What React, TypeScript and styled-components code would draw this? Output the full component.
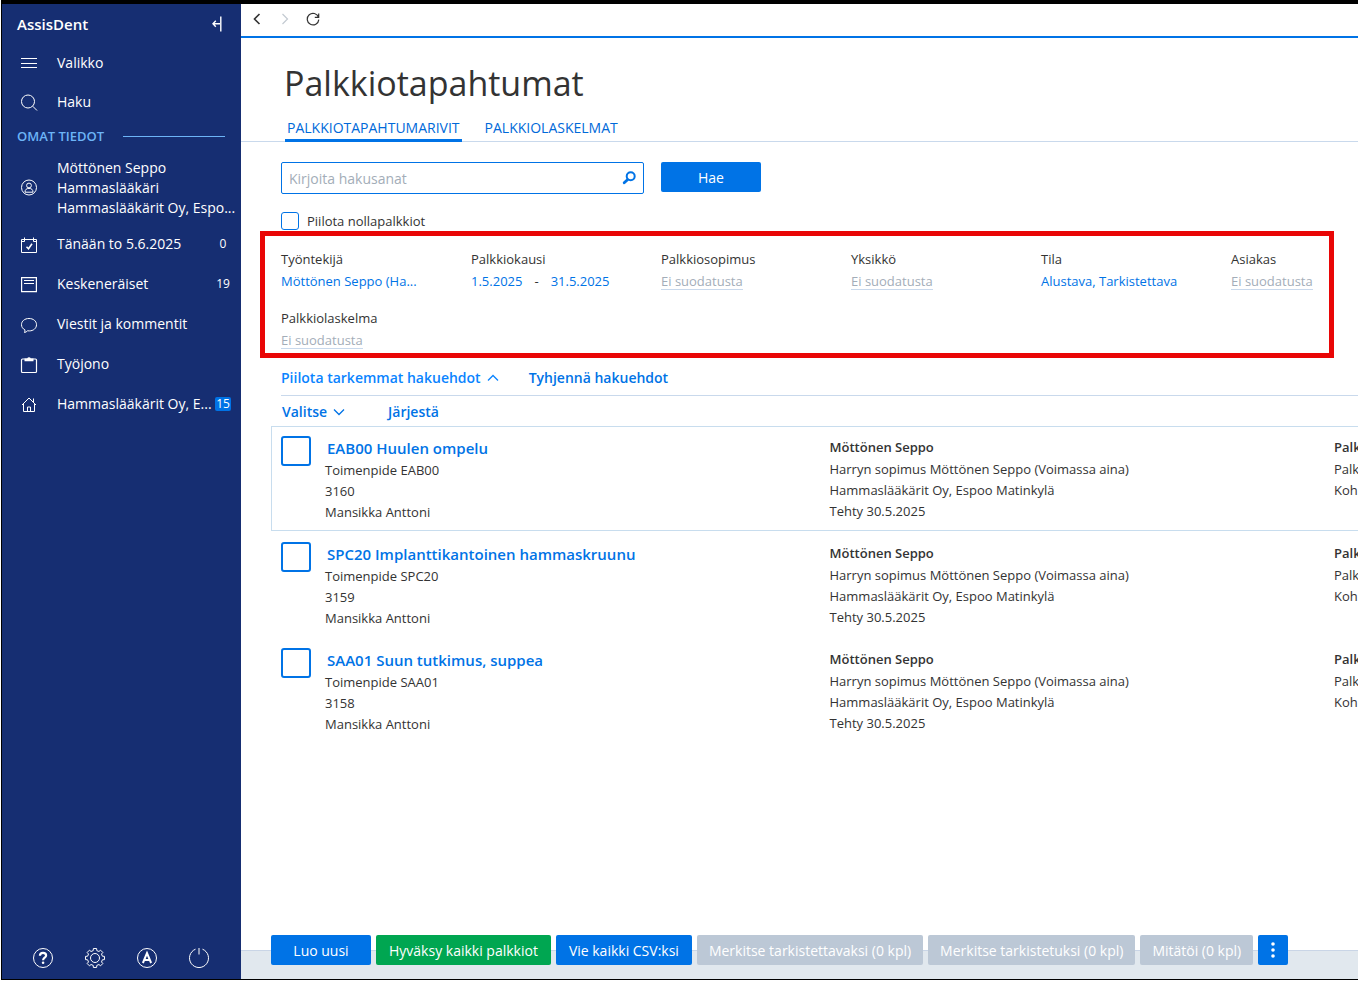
import React from 'react';
import styled, { createGlobalStyle } from 'styled-components';

const color = {
  navy: '#162e72',
  blue: '#0073e6',
  bright: '#0a84ff',
  link: '#0069d9',
  text: '#333333',
  muted: '#a3adb8',
  line: '#c9d9ec',
};

const GlobalStyle = createGlobalStyle`
  *, *::before, *::after { box-sizing: border-box; }
  body {
    margin: 0;
    background: #fff;
    color: ${color.text};
    font-family: "Open Sans", "Noto Sans", sans-serif;
    font-size: 13px;
    line-height: 21px;
  }
  button, input { font: inherit; color: inherit; }
  button { border: 0; padding: 0; background: none; cursor: pointer; white-space: nowrap; }
  a { text-decoration: none; color: inherit; }
  ul { list-style: none; margin: 0; padding: 0; }
  svg { display: block; }
`;

const Shell = styled.div`
  display: flex;
  min-height: calc(100vh - 1px);
  margin: 0 0 1px 1px;
  border: solid #000;
  border-width: 4px 0 1px 1px;
  overflow: hidden;
`;

/* ---------- sidebar ---------- */

const Sidebar = styled.aside`
  flex: none;
  width: 239px;
  display: flex;
  flex-direction: column;
  background: ${color.navy};
  color: #fff;
  font-size: 14px;
  line-height: 20px;
`;

const Brand = styled.div`
  display: flex;
  align-items: center;
  justify-content: space-between;
  height: 39px;
  padding: 0 19px 0 15px;
  font-size: 15px;
  font-weight: 600;
`;

const NavItem = styled.a<{ $height?: number }>`
  display: flex;
  align-items: center;
  height: ${(p) => p.$height ?? 40}px;
  padding: 0 10px 0 17px;
  white-space: nowrap;
  svg { flex: none; margin-right: 18px; }
`;

const NavText = styled.span`
  flex: 1 1 0;
  min-width: 0;
`;

const NavLine = styled.span`
  display: block;
`;

const Count = styled.span<{ $filled?: boolean }>`
  flex: none;
  min-width: 16px;
  line-height: 14px;
  font-size: 12px;
  text-align: center;
  border-radius: 2px;
  background: ${(p) => (p.$filled ? color.blue : 'transparent')};
`;

const SectionTitle = styled.h2`
  display: flex;
  align-items: center;
  gap: 19px;
  height: 30px;
  margin: 0;
  padding: 0 16px 0 15px;
  color: #6cb4f7;
  font-size: 13px;
  font-weight: 600;
  &::after { content: ''; flex: 1; height: 1px; background: #6cb4f7; }
`;

const SidebarTools = styled.div`
  display: flex;
  gap: 30px;
  margin-top: auto;
  padding: 0 0 10px 30px;
`;

/* ---------- main column ---------- */

const Main = styled.main`
  flex: 1 1 0;
  min-width: 0;
  display: flex;
  flex-direction: column;
`;

const Toolbar = styled.div`
  display: flex;
  align-items: center;
  gap: 12px;
  height: 34px;
  padding: 0 0 2px 8px;
  border-bottom: 2px solid ${color.blue};
`;

const PageTitle = styled.h1`
  margin: 0;
  padding: 20px 43px 0;
  font-size: 34px;
  line-height: 50px;
  font-weight: 400;
`;

const Tabs = styled.nav`
  display: flex;
  gap: 21px;
  margin-top: 8px;
  padding-left: 44px;
  border-bottom: 1px solid ${color.line};
`;

const Tab = styled.a<{ $active?: boolean }>`
  margin-bottom: -1px;
  padding: 0 2px;
  border-bottom: 3px solid ${(p) => (p.$active ? color.blue : 'transparent')};
  color: ${color.link};
  font-size: 14px;
  line-height: 23px;
`;

const SearchRow = styled.form`
  display: flex;
  gap: 17px;
  padding: 20px 40px 0;
`;

const SearchBox = styled.label`
  display: flex;
  align-items: center;
  width: 363px;
  height: 32px;
  padding: 0 6px 0 7px;
  border: 1px solid ${color.blue};
  border-radius: 2px;
  input {
    flex: 1;
    min-width: 0;
    padding: 0;
    border: 0;
    outline: 0;
    background: none;
    font-size: 14px;
  }
  input::placeholder { color: ${color.muted}; opacity: 1; }
`;

const ActionButton = styled.button<{ $tone?: 'blue' | 'green' | 'grey'; $min?: number }>`
  display: flex;
  align-items: center;
  justify-content: center;
  min-width: ${(p) => p.$min ?? 30}px;
  height: 30px;
  padding: 0 ${(p) => (p.$tone === 'grey' ? 12 : 13)}px;
  border-radius: 2px;
  background: ${(p) => ({ blue: color.blue, green: '#00a651', grey: '#bcc8d6' })[p.$tone ?? 'blue']};
  color: #fff;
  font-size: 14px;
`;

const IconAction = styled(ActionButton)`
  padding: 0;
`;

const CheckRow = styled.label`
  display: flex;
  align-items: center;
  gap: 8px;
  height: 18px;
  margin: 18px 0 1px 40px;
`;

const CheckBox = styled.input.attrs({ type: 'checkbox' })<{ $large?: boolean }>`
  appearance: none;
  flex: none;
  width: ${(p) => (p.$large ? 30 : 18)}px;
  height: ${(p) => (p.$large ? 30 : 18)}px;
  margin: 0;
  border: ${(p) => (p.$large ? 2 : 1)}px solid ${color.blue};
  border-radius: 3px;
  background: #fff;
`;

const Filters = styled.section`
  display: grid;
  grid-template-columns: repeat(5, minmax(0, 190px)) auto;
  row-gap: 15px;
  margin: 0 24px 0 19px;
  padding: 12px 0 2px 16px;
  border: 5px solid #e90606;
`;

const Filter = styled.div`
  display: flex;
  flex-direction: column;
  align-items: flex-start;
  line-height: 22px;
  white-space: nowrap;
`;

const FilterValues = styled.div`
  display: flex;
  align-items: flex-start;
  gap: 12px;
  height: 22px;
`;

const FilterValue = styled.button<{ $empty?: boolean }>`
  height: 20px;
  border-bottom: 1px solid ${(p) => (p.$empty ? color.line : 'transparent')};
  color: ${(p) => (p.$empty ? color.muted : color.blue)};
`;

const LinkRow = styled.div<{ $gap: number }>`
  display: flex;
  gap: ${(p) => p.$gap}px;
  margin-left: 40px;
`;

const FilterLinks = styled(LinkRow)`
  height: 38px;
  padding-top: 9px;
  border-bottom: 1px solid ${color.line};
`;

const ListLinks = styled(LinkRow)`
  height: 30px;
  padding: 5px 0 0 1px;
`;

const TextButton = styled.button<{ $bright?: boolean }>`
  display: flex;
  align-items: center;
  gap: 6px;
  height: 21px;
  color: ${(p) => (p.$bright ? color.bright : color.blue)};
  font-size: 14px;
  font-weight: 600;
`;

const Row = styled.li<{ $selected?: boolean }>`
  display: grid;
  grid-template-columns: 44px repeat(2, minmax(0, 1fr)) 24px;
  height: 105px;
  margin: 0 0 1px 30px;
  padding: 9px 0 0 9px;
  border: 1px solid ${(p) => (p.$selected ? '#c8ddee' : 'transparent')};
  border-right: 0;
`;

const Cell = styled.div`
  display: flex;
  flex-direction: column;
  align-items: flex-start;
  white-space: nowrap;
`;

const RowTitle = styled.a`
  padding-left: 2px;
  color: ${color.blue};
  font-size: 15px;
  line-height: 24px;
  font-weight: 600;
`;

const RowName = styled.strong`
  line-height: 23px;
  font-weight: 600;
`;

const Footer = styled.footer`
  display: flex;
  gap: 5px;
  height: 29px;
  margin-top: auto;
  padding-left: 30px;
  border-top: 1px solid #c9d5e6;
  background: #e1e8ee;
  ${ActionButton} { margin-top: -16px; }
`;

/* ---------- icons ---------- */

const Svg = ({ size = 20, w = 1, children }: { size?: number; w?: number; children: React.ReactNode }) => (
  <svg width={size} height={size} viewBox={`0 0 ${size} ${size}`} fill="none" stroke="currentColor" strokeWidth={w} aria-hidden="true">
    {children}
  </svg>
);

const CollapseIcon = () => (
  <svg width="10" height="16" viewBox="0 0 10 16" fill="none" stroke="#fff" strokeWidth="1.4" aria-hidden="true">
    <path d="M8.8 0.5v15M8 7.8H1M3.8 4.8L1 7.8l2.8 3" />
  </svg>
);
const MenuIcon = () => <Svg><path d="M2 5.5h16M2 10.5h16M2 14.5h16" /></Svg>;
const SearchIcon = () => <Svg><circle cx="9" cy="9.5" r="6.5" /><path d="M13.7 14.2L18 18.5" /></Svg>;
const UserIcon = () => (
  <Svg>
    <circle cx="10" cy="9.5" r="7.5" />
    <circle cx="10" cy="7.5" r="2.4" />
    <path d="M6 14.2c0-2.6 1.5-3.8 4-3.8s4 1.2 4 3.8z" />
  </Svg>
);
const CalendarIcon = () => (
  <Svg>
    <path d="M2.5 5.500h15v13h-15zM2.500 7.500h3M14.500 7.500h3M5.500 3.500v4M14.500 3.500v4" />
    <path strokeWidth="1.5" d="M7.5 12.8l2 2 3.5-5" />
  </Svg>
);
const NotesIcon = () => <Svg><path strokeWidth="1.2" d="M2.6 3.6h14.8v14H2.6z" /><path d="M5 6.5h10M5 9.5h10" /></Svg>;
const ChatIcon = () => <Svg><path d="M5.500 18.500c.4-1 .5-1.700.4-2.700C3.800 14.800 2.500 13 2.500 10.700 2.500 7 5.700 4.500 10 4.500s7.500 2.500 7.500 6.200-3.200 6.200-7.200 6.200c-.6 0-1.200 0-1.800-.1-.8.9-1.800 1.500-3 1.700z" /></Svg>;
const ClipboardIcon = () => (
  <Svg>
    <path strokeWidth="1.2" d="M3.5 5h13a1 1 0 0 1 1 1v11.500a1 1 0 0 1-1 1h-13a1 1 0 0 1-1-1V6a1 1 0 0 1 1-1z" />
    <path fill="currentColor" stroke="none" d="M5.5 4.500h2.700a1.900 1.900 0 0 1 3.600 0h2.700v2.700h-9z" />
  </Svg>
);
const HomeIcon = () => <Svg><path d="M3 11l7-7 7 7M4.500 10v7.500h11V10M8.500 17.500v-4.500h3v4.500M14.500 8V4.500" /></Svg>;

const HelpIcon = () => (
  <Svg size={22}>
    <circle cx="11" cy="11" r="9.5" />
    <path strokeWidth="2.2" d="M7.900 8.700c.1-2 1.300-2.900 3.100-2.900 1.900 0 3.100 1 3.100 2.600 0 2.300-3 2.300-3 4.800" />
    <circle cx="11.1" cy="15.7" r="1.3" fill="currentColor" stroke="none" />
  </Svg>
);
const gearPath = (() => {
  const pts: string[] = [];
  for (let i = 0; i < 8; i++) {
    const base = (i * Math.PI) / 4;
    [[-0.24, 7.6], [-0.17, 9.6], [0.17, 9.6], [0.24, 7.6]].forEach(([a, r]) => {
      pts.push(`${(11 + r * Math.sin(base + a)).toFixed(2)} ${(11 - r * Math.cos(base + a)).toFixed(2)}`);
    });
  }
  return `M${pts.join('L')}Z`;
})();
const GearIcon = () => <Svg size={22}><path strokeLinejoin="round" d={gearPath} /><circle cx="11" cy="11" r="4.5" /></Svg>;
const AccountIcon = () => (
  <Svg size={22}>
    <circle cx="11" cy="11" r="9.5" />
    <path strokeWidth="2" d="M6.9 16L11 6.200 15.100 16M8.300 13h5.400" />
  </Svg>
);
const PowerIcon = () => <Svg size={22}><path d="M7.5 2.200A9.500 9.500 0 1 0 14.500 2.200M11 1v6.500" /></Svg>;

const BackIcon = () => <Svg size={16} w={1.6}><path d="M10.5 3L5.500 8l5 5" /></Svg>;
const ForwardIcon = () => <Svg size={16} w={1.2}><path stroke="#c3cad1" d="M5.5 3l5 5-5 5" /></Svg>;
const ReloadIcon = () => <Svg size={16} w={1.2}><path d="M13.5 6.200A5.800 5.800 0 1 0 13.800 8.600M13.700 2.500v3.900H9.800" /></Svg>;
const FindIcon = () => (
  <svg width="16" height="16" viewBox="0 0 16 16" fill="none" stroke={color.blue} strokeWidth="2" aria-hidden="true">
    <circle cx="9.7" cy="6.2" r="4" />
    <path strokeWidth="2.8" strokeLinecap="round" d="M6.5 9.700L3.200 12.800" />
  </svg>
);
const Chevron = ({ up }: { up?: boolean }) => (
  <svg width="12" height="8" viewBox="0 0 12 8" fill="none" stroke="currentColor" strokeWidth="1.3" aria-hidden="true">
    <path d={up ? 'M1 6.5l5-5 5 5' : 'M1 1.5l5 5 5-5'} />
  </svg>
);
const DotsIcon = () => (
  <svg width="6" height="18" viewBox="0 0 6 18" fill="#fff" aria-hidden="true">
    <circle cx="3" cy="3" r="1.8" /><circle cx="3" cy="9" r="1.8" /><circle cx="3" cy="15" r="1.8" />
  </svg>
);

/* ---------- data ---------- */

const navItems = [
  { icon: <CalendarIcon />, text: 'Tänään to 5.6.2025', count: '0' },
  { icon: <NotesIcon />, text: 'Keskeneräiset', count: '19' },
  { icon: <ChatIcon />, text: 'Viestit ja kommentit' },
  { icon: <ClipboardIcon />, text: 'Työjono' },
  { icon: <HomeIcon />, text: 'Hammaslääkärit Oy, E...', count: '15', filled: true },
];

const filters: { label: string; values?: string[] }[] = [
  { label: 'Työntekijä', values: ['Möttönen Seppo (Ha...'] },
  { label: 'Palkkiokausi', values: ['1.5.2025', '31.5.2025'] },
  { label: 'Palkkiosopimus' },
  { label: 'Yksikkö' },
  { label: 'Tila', values: ['Alustava, Tarkistettava'] },
  { label: 'Asiakas' },
  { label: 'Palkkiolaskelma' },
];

const rows = [
  { code: 'EAB00', name: 'Huulen ompelu', id: '3160' },
  { code: 'SPC20', name: 'Implanttikantoinen hammaskruunu', id: '3159' },
  { code: 'SAA01', name: 'Suun tutkimus, suppea', id: '3158' },
];

export default function App() {
  return (
    <>
      <GlobalStyle />
      <Shell>
        <Sidebar>
          <Brand>
            AssisDent
            <button type="button" aria-label="Pienennä"><CollapseIcon /></button>
          </Brand>
          <NavItem href="#valikko" $height={39}><MenuIcon /><NavText>Valikko</NavText></NavItem>
          <NavItem href="#haku" $height={39}><SearchIcon /><NavText>Haku</NavText></NavItem>
          <SectionTitle>OMAT TIEDOT</SectionTitle>
          <NavItem href="#kayttaja" $height={73}>
            <UserIcon />
            <NavText>
              <NavLine>Möttönen Seppo</NavLine>
              <NavLine>Hammaslääkäri</NavLine>
              <NavLine>Hammaslääkärit Oy, Espo...</NavLine>
            </NavText>
          </NavItem>
          {navItems.map((item) => (
            <NavItem key={item.text} href="#">
              {item.icon}
              <NavText>{item.text}</NavText>
              {item.count && <Count $filled={item.filled}>{item.count}</Count>}
            </NavItem>
          ))}
          <SidebarTools>
            <button type="button" aria-label="Ohje"><HelpIcon /></button>
            <button type="button" aria-label="Asetukset"><GearIcon /></button>
            <button type="button" aria-label="AssisDent"><AccountIcon /></button>
            <button type="button" aria-label="Kirjaudu ulos"><PowerIcon /></button>
          </SidebarTools>
        </Sidebar>

        <Main>
          <Toolbar>
            <button type="button" aria-label="Takaisin"><BackIcon /></button>
            <button type="button" aria-label="Eteenpäin"><ForwardIcon /></button>
            <button type="button" aria-label="Päivitä"><ReloadIcon /></button>
          </Toolbar>
          <PageTitle>Palkkiotapahtumat</PageTitle>
          <Tabs>
            <Tab href="#rivit" $active>PALKKIOTAPAHTUMARIVIT</Tab>
            <Tab href="#laskelmat">PALKKIOLASKELMAT</Tab>
          </Tabs>

          <SearchRow onSubmit={(e) => e.preventDefault()}>
            <SearchBox>
              <input type="text" placeholder="Kirjoita hakusanat" aria-label="Kirjoita hakusanat" />
              <FindIcon />
            </SearchBox>
            <ActionButton type="submit" $min={100}>Hae</ActionButton>
          </SearchRow>
          <CheckRow><CheckBox />Piilota nollapalkkiot</CheckRow>

          <Filters>
            {filters.map((f) => (
              <Filter key={f.label}>
                <span>{f.label}</span>
                <FilterValues>
                  {f.values ? (
                    f.values.map((v, i) => (
                      <React.Fragment key={v}>
                        {i > 0 && <span>-</span>}
                        <FilterValue type="button">{v}</FilterValue>
                      </React.Fragment>
                    ))
                  ) : (
                    <FilterValue type="button" $empty>Ei suodatusta</FilterValue>
                  )}
                </FilterValues>
              </Filter>
            ))}
          </Filters>

          <FilterLinks $gap={30}>
            <TextButton type="button" $bright>Piilota tarkemmat hakuehdot <Chevron up /></TextButton>
            <TextButton type="button">Tyhjennä hakuehdot</TextButton>
          </FilterLinks>
          <ListLinks $gap={43}>
            <TextButton type="button">Valitse <Chevron /></TextButton>
            <TextButton type="button">Järjestä</TextButton>
          </ListLinks>

          <ul>
            {rows.map((r, i) => (
              <Row key={r.id} $selected={i === 0}>
                <CheckBox $large aria-labelledby={`row-${r.id}`} />
                <Cell>
                  <RowTitle id={`row-${r.id}`} href={`#${r.id}`}>{r.code} {r.name}</RowTitle>
                  <span>Toimenpide {r.code}</span>
                  <span>{r.id}</span>
                  <span>Mansikka Anttoni</span>
                </Cell>
                <Cell>
                  <RowName>Möttönen Seppo</RowName>
                  <span>Harryn sopimus Möttönen Seppo (Voimassa aina)</span>
                  <span>Hammaslääkärit Oy, Espoo Matinkylä</span>
                  <span>Tehty 30.5.2025</span>
                </Cell>
                <Cell>
                  <RowName>Palk</RowName>
                  <span>Palk</span>
                  <span>Koh</span>
                </Cell>
              </Row>
            ))}
          </ul>

          <Footer>
            <ActionButton type="button" $min={100}>Luo uusi</ActionButton>
            <ActionButton type="button" $tone="green">Hyväksy kaikki palkkiot</ActionButton>
            <ActionButton type="button">Vie kaikki CSV:ksi</ActionButton>
            <ActionButton type="button" $tone="grey" disabled>Merkitse tarkistettavaksi (0 kpl)</ActionButton>
            <ActionButton type="button" $tone="grey" disabled>Merkitse tarkistetuksi (0 kpl)</ActionButton>
            <ActionButton type="button" $tone="grey" disabled>Mitätöi (0 kpl)</ActionButton>
            <IconAction type="button" aria-label="Lisää toimintoja"><DotsIcon /></IconAction>
          </Footer>
        </Main>
      </Shell>
    </>
  );
}
